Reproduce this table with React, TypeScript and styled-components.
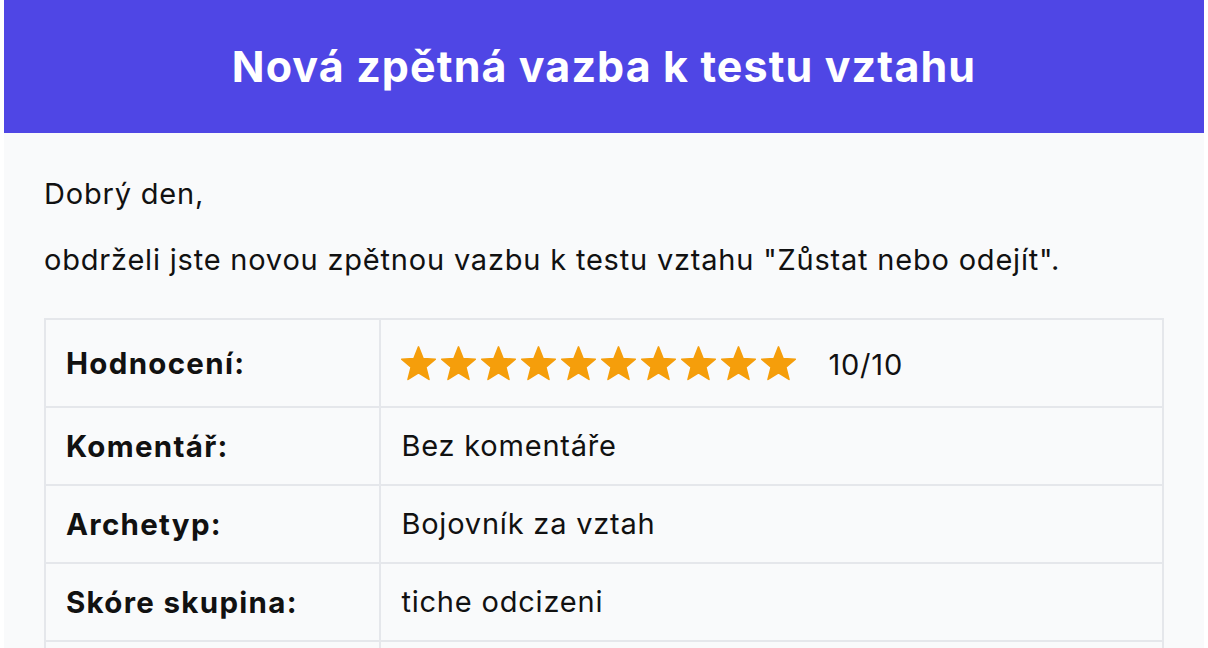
import React from 'react';
import styled, { createGlobalStyle } from 'styled-components';

const GlobalStyle = createGlobalStyle`
  html, body {
    margin: 0;
    padding: 0;
    background: #ffffff;
  }
  body {
    font-family: Inter, "Noto Sans", "Liberation Sans", sans-serif;
    color: #111111;
  }
`;

type Row = { label: string; value: React.ReactNode };

const Star = () => (
  <svg width="35" height="35" viewBox="1.6 1.7 20.8 20.8">
    <path
      d="M12 2.2l2.75 6.95 7.25.45-5.6 4.7 1.85 7.3L12 17.6l-6.25 4 1.85-7.3L2 9.6l7.25-.45z"
      fill="#f59e0b"
      stroke="#f59e0b"
      strokeWidth="0.9"
      strokeLinejoin="round"
    />
  </svg>
);

const Rating = ({ score, max }: { score: number; max: number }) => (
  <RatingWrap>
    <Stars>
      {Array.from({ length: score }).map((_, i) => (
        <Star key={i} />
      ))}
    </Stars>
    <Score>
      {score}/{max}
    </Score>
  </RatingWrap>
);

const rows: Row[] = [
  { label: 'Hodnocení:', value: <Rating score={10} max={10} /> },
  { label: 'Komentář:', value: 'Bez komentáře' },
  { label: 'Archetyp:', value: 'Bojovník za vztah' },
  { label: 'Skóre skupina:', value: 'tiche odcizeni' },
  { label: 'Datum:', value: '12. 3. 2025' },
];

const App = () => {
  return (
    <>
      <GlobalStyle />
      <Mail>
        <Header>
          <Title>Nová zpětná vazba k testu vztahu</Title>
        </Header>
        <Body>
          <Text>Dobrý den,</Text>
          <Text>obdrželi jste novou zpětnou vazbu k testu vztahu "Zůstat nebo odejít".</Text>
          <Table>
            <tbody>
              {rows.map((r) => (
                <tr key={r.label}>
                  <Label>{r.label}</Label>
                  <Value>{r.value}</Value>
                </tr>
              ))}
            </tbody>
          </Table>
        </Body>
      </Mail>
    </>
  );
};

const Mail = styled.div`
  width: 1200px;
  margin: 0 auto;
  background: #f9fafb;
  min-height: 648px;
`;

const Header = styled.header`
  background: #4f46e5;
  padding: 40px 20px;
  text-align: center;
`;

const Title = styled.h1`
  margin: 0;
  font-size: 43px;
  line-height: 53px;
  font-weight: 700;
  color: #ffffff;
  letter-spacing: 1.1px;
`;

const Body = styled.main`
  padding: 40px;
`;

const Text = styled.p`
  margin: 0 0 24px;
  font-size: 29px;
  line-height: 42px;
  letter-spacing: 0.8px;
`;

const Table = styled.table`
  width: 100%;
  margin-top: 37px;
  border-collapse: collapse;
  font-size: 29px;
  line-height: 36px;
`;

const Label = styled.td`
  width: 30%;
  padding: 20px;
  border: 2px solid #e5e7eb;
  font-size: 29.5px;
  font-weight: 700;
  letter-spacing: 1.3px;
  vertical-align: middle;
`;

const Value = styled.td`
  padding: 20px;
  border: 2px solid #e5e7eb;
  letter-spacing: 0.8px;
  vertical-align: middle;
`;

const RatingWrap = styled.div`
  display: flex;
  align-items: center;
  height: 46px;
`;

const Stars = styled.div`
  display: flex;
  gap: 5px;
`;

const Score = styled.span`
  margin-left: 32px;
  padding-top: 4px;
`;

export default App;
